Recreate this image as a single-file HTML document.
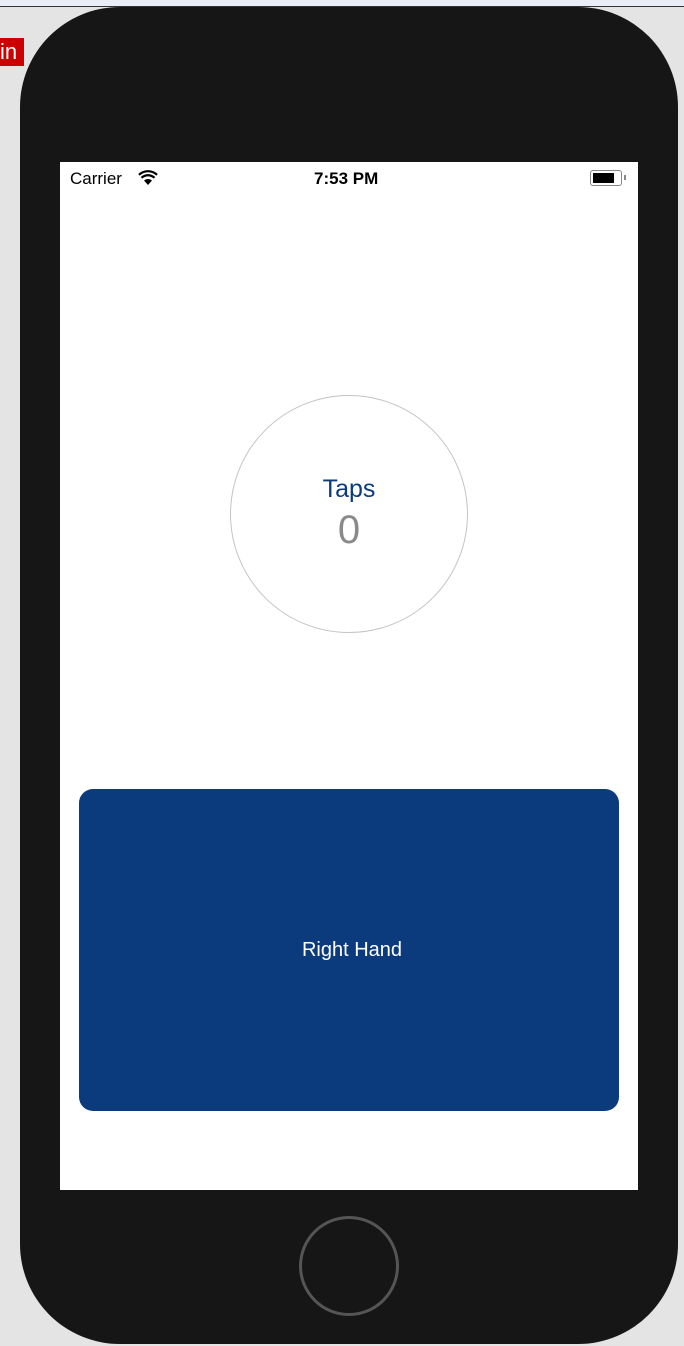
<!DOCTYPE html>
<html><head><style>
body{margin:0;width:684px;height:1346px;overflow:hidden;background:#e4e4e4;position:relative;font-family:"Liberation Sans",sans-serif}
.top{position:absolute;left:0;top:0;width:684px;height:6px;background:#e8eef5;border-bottom:1px solid #333}
.in{position:absolute;left:0;top:38px;width:24px;height:28px;background:#c00;color:#fff;font-size:22px;line-height:28px}
.phone{position:absolute;left:20px;top:7px;width:658px;height:1337px;background:#161616;border-radius:100px}
.screen{position:absolute;left:60px;top:162px;width:578px;height:1028px;background:#fff}
.sb{position:absolute;top:7px;font-size:17px;color:#000}
.circ{position:absolute;left:170px;top:233px;width:236px;height:236px;border:1.5px solid #c4c4c4;border-radius:50%;text-align:center}
.btn{position:absolute;left:19px;top:627px;width:540px;height:322px;background:#0b3a7d;border-radius:14px;color:#fff;font-size:20px;text-align:center;line-height:322px;text-indent:6px}
.home{position:absolute;left:299px;top:1216px;width:94px;height:94px;border:3px solid #555;border-radius:50%}
</style></head><body>
<div class="top"></div>
<div class="in">in</div>
<div class="phone"></div>
<div class="screen">
<div class="sb" style="left:10px">Carrier</div>
<svg style="position:absolute;left:78px;top:8px" width="20" height="16" viewBox="0 0 20 16"><path d="M10 15 L6 10.5 A6 6 0 0 1 14 10.5Z" fill="#000"/><path d="M3.5 7.8 A9.5 9.5 0 0 1 16.5 7.8" stroke="#000" stroke-width="2.2" fill="none"/><path d="M1 4.8 A13 13 0 0 1 19 4.8" stroke="#000" stroke-width="2.2" fill="none"/></svg>
<div class="sb" style="left:254px;font-weight:bold">7:53 PM</div>
<div style="position:absolute;left:530px;top:8px;width:30px;height:14px;border:1.5px solid #888;border-radius:3px"><div style="margin:2px;width:21px;height:10px;background:#000"></div></div>
<div style="position:absolute;left:564px;top:13px;width:2px;height:5px;background:#888"></div>
<div class="circ"><div style="margin-top:79px;font-size:25px;color:#0b3a7d">Taps</div><div style="font-size:40px;color:#8a8a8a;margin-top:4px">0</div></div>
<div class="btn">Right Hand</div>
</div>
<div class="home"></div>
</body></html>
